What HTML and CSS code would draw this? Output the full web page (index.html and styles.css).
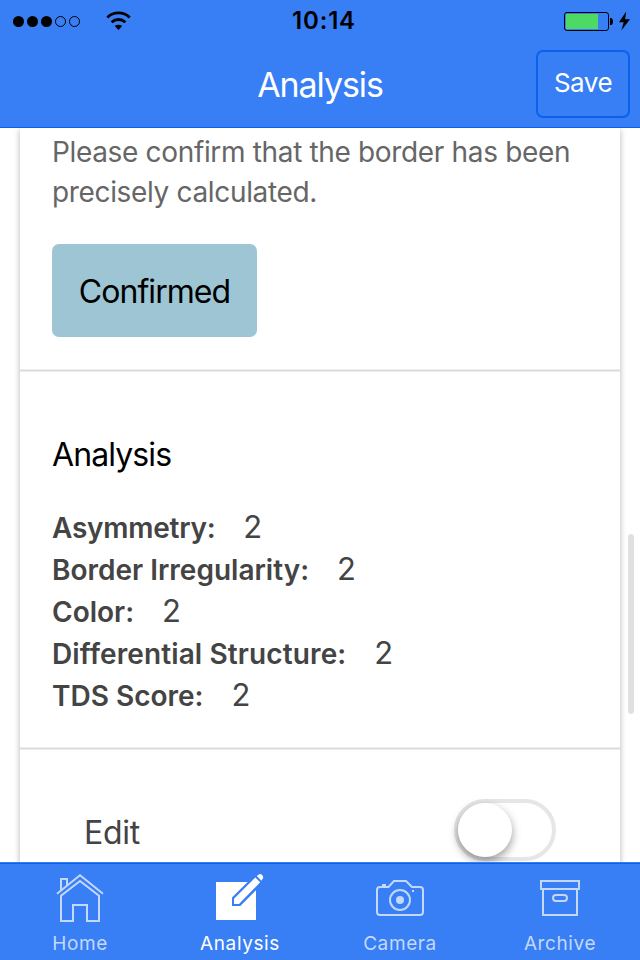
FILE: index.html
```html
<!DOCTYPE html>
<html lang="en">
<head>
<meta charset="utf-8">
<title>Analysis</title>
<link rel="stylesheet" href="styles.css">
</head>
<body>
<div class="app">
  <header class="header">
    <div class="status">
      <svg class="status-left" width="140" height="40" viewBox="0 0 140 40">
        <circle cx="18.5" cy="20.5" r="5.5"/><circle cx="32.5" cy="20.5" r="5.5"/><circle cx="46.5" cy="20.5" r="5.5"/>
        <g fill="none" stroke="#000"><circle cx="60.5" cy="20.5" r="5"/><circle cx="74.5" cy="20.5" r="5"/></g>
        <g fill="none" stroke="#000" stroke-width="2.8"><path d="M107.3 16.4a16.2 16.2 0 0 1 22.4 0"/><path d="M111.6 21.2a10.2 10.2 0 0 1 13.8 0"/></g>
        <path d="M114.8 25.1a5.5 5.5 0 0 1 7.4 0L118.5 29z"/>
      </svg>
      <span class="clock">10:14</span>
      <svg class="status-right" width="80" height="40" viewBox="560 0 80 40">
        <rect x="564.5" y="11.5" width="44" height="18" rx="2.5" fill="none" stroke="#000"/>
        <rect x="566" y="13" width="32" height="15" fill="#4cd964"/>
        <path d="M610 17h1.5q1.5 1 1.5 3.5t-1.5 3.5H610z"/>
        <path d="M626.2 10.5 619 21.3h4.7L621.3 29.5 630 18.3h-4.9z"/>
      </svg>
    </div>
    <div class="nav">
      <h1 class="title">Analysis</h1>
      <button class="save">Save</button>
    </div>
  </header>
  <main class="content">
    <div class="card">
      <section class="confirm">
        <p class="message">Please confirm that the border has been<br>precisely calculated.</p>
        <button class="confirmed">Confirmed</button>
      </section>
      <section class="results">
        <h2 class="heading">Analysis</h2>
        <div class="row tight"><b>Asymmetry:</b><span>2</span></div>
        <div class="row"><b>Border Irregularity:</b><span>2</span></div>
        <div class="row"><b>Color:</b><span>2</span></div>
        <div class="row loose"><b>Differential Structure:</b><span>2</span></div>
        <div class="row"><b>TDS Score:</b><span>2</span></div>
      </section>
      <section class="edit">
        <span class="edit-label">Edit</span>
        <span class="toggle"><span class="knob"></span></span>
      </section>
    </div>
    <div class="scrollbar"></div>
  </main>
  <nav class="tabs">
    <a class="tab">
      <svg width="60" height="56" viewBox="50 864 60 56" fill="none" stroke="currentColor" stroke-width="2">
        <path d="M57 893.8 80 875.3 103 893.8M61 890.5V879h6v6.7M61 895.8V921h12V905h14v16h12V895.8L80 881z"/>
      </svg>
      <span>Home</span>
    </a>
    <a class="tab active">
      <svg width="60" height="56" viewBox="210 864 60 56" fill="currentColor">
        <path d="M216 882h31.7L232 897.6V906h8.3L256 890.3V920H216z"/>
        <path d="M234 898.7 255.3 877.4 260.2 882.3 239 904h-5zM256.8 876l2.1-1.6q1.5-1 3.2.6t.7 3.5l-1.4 2.2z"/>
      </svg>
      <span>Analysis</span>
    </a>
    <a class="tab">
      <svg width="60" height="56" viewBox="370 864 60 56" fill="none" stroke="currentColor" stroke-width="2">
        <path d="M380 887h8.5l5.5-6h12l6 6h8q3 0 3 3v22q0 3-3 3h-40q-3 0-3-3v-22q0-3 3-3z"/>
        <circle cx="400" cy="900" r="10"/><circle cx="400" cy="900" r="4" fill="currentColor" stroke="none"/>
        <path d="M382 885h4M412 891h2"/>
      </svg>
      <span>Camera</span>
    </a>
    <a class="tab">
      <svg width="60" height="56" viewBox="530 864 60 56" fill="none" stroke="currentColor" stroke-width="2">
        <path d="M541 881h38v8h-38zM543 889v26h34v-26"/><rect x="553" y="895" width="14" height="6" rx="3"/>
      </svg>
      <span>Archive</span>
    </a>
  </nav>
</div>
</body>
</html>
```
FILE: styles.css
```css
* { box-sizing: border-box; }
body { margin: 0; font-family: Inter, "Liberation Sans", sans-serif; background: #fff; }
button { font: inherit; padding: 0; }
h1, h2, p { margin: 0; font-weight: 400; }
.app { display: flex; flex-direction: column; width: 640px; height: 960px; overflow: hidden; }
.header { height: 128px; flex: none; background: #387ef5; border-bottom: 1px solid #0c60ee; }
.status { display: grid; grid-template-columns: 1fr auto 1fr; height: 40px; align-items: center; }
.status svg { display: block; }
.status-right { justify-self: end; }
.clock { font-size: 24px; font-weight: 600; line-height: 40px; letter-spacing: 0.8px; padding: 1px 0 0 8px; }
.nav { display: grid; grid-template-columns: 1fr auto 1fr; height: 87px; padding: 10px 10px 0; align-items: start; }
.title { grid-column: 2; padding-top: 1px; font-size: 34px; line-height: 68px; color: #fff; letter-spacing: -1.1px; }
.save { justify-self: end; width: 94px; height: 68px; border: 2px solid #0c60ee; border-radius: 7px; background: transparent; color: #fff; font-size: 26px; line-height: 62px; padding-bottom: 2px; letter-spacing: -0.5px; }
.content { flex: 1; min-height: 0; position: relative; overflow: hidden; }
.card { margin: 0 20px; height: 800px; background: #fff; box-shadow: 0 2px 6px rgba(0, 0, 0, 0.3); }
.confirm { height: 243px; padding: 4px 32px 0; }
.confirm, .results { border-bottom: 1px solid #dadada; box-shadow: inset 0 -1px #eee, 0 1px #eee; }
.message { font-size: 28px; line-height: 40px; color: #666; white-space: nowrap; letter-spacing: -0.34px; }
.confirmed { display: block; margin-top: 32px; width: 205px; height: 93px; border: 0; border-radius: 7px; padding-top: 2px; background: #9dc5d3; font-size: 32px; color: #000; letter-spacing: -0.95px; }
.results { height: 378px; padding: 61px 32px 0; }
.heading { font-size: 32px; line-height: 46px; margin-bottom: 28px; letter-spacing: -0.9px; }
.row { display: flex; align-items: baseline; gap: 28px; height: 42px; line-height: 42px; color: #444; font-size: 28px; }
.row b { font-weight: 600; }
.row span { font-size: 31px; font-weight: 400; }
.tight b { letter-spacing: -0.25px; }
.loose b { letter-spacing: 0.12px; }
.edit { display: flex; justify-content: space-between; padding: 50px 64px 0; color: #444; font-size: 32px; }
.edit-label { line-height: 68px; letter-spacing: -0.3px; }
.toggle { width: 102px; height: 62px; border: 4px solid #e6e6e6; border-radius: 31px; }
.knob { display: block; width: 54px; height: 54px; border-radius: 50%; background: #fff; box-shadow: 0 4px 10px rgba(0, 0, 0, 0.4); }
.scrollbar { position: absolute; right: 6px; top: 406px; width: 6px; height: 180px; border-radius: 3px; background: #e0e0e0; }
.tabs { flex: none; height: 98px; display: grid; grid-template-columns: repeat(4, 1fr); background: linear-gradient(#0c60ee, #0c60ee) 0 1px / 100% 1px no-repeat #387ef5; }
.tab { display: flex; flex-direction: column; align-items: center; padding-top: 2px; color: #c3d8fc; font-size: 19px; line-height: 28px; letter-spacing: 0.6px; }
.tab svg { display: block; overflow: visible; margin-bottom: 10px; flex: none; }
.active { color: #fff; }
```
